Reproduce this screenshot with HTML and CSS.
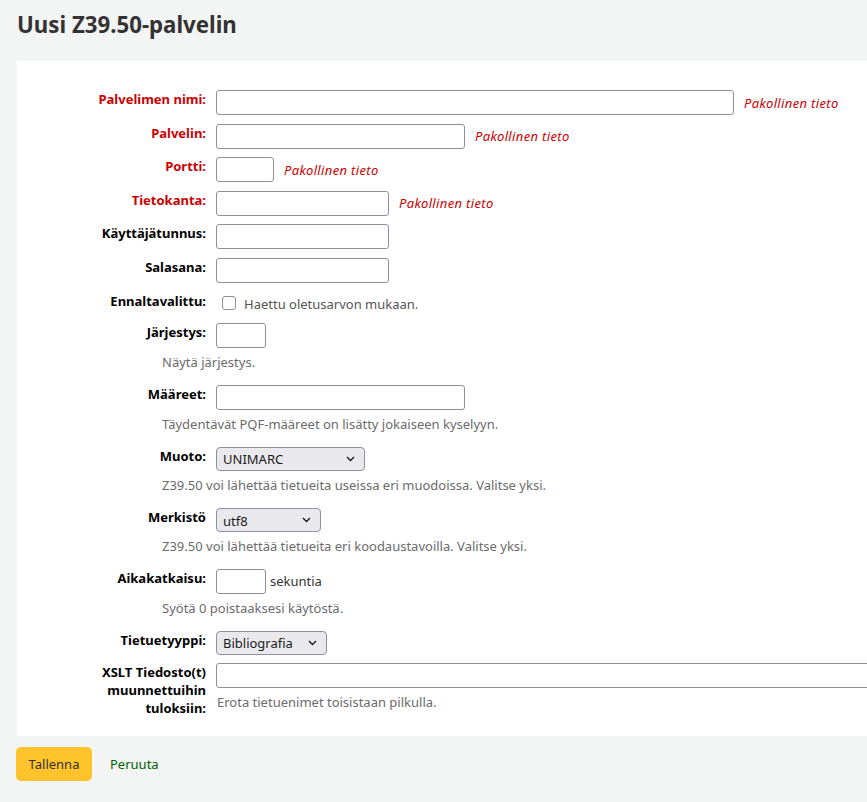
FILE: index.html
```html
<!DOCTYPE html>
<html lang="fi">
<head>
<meta charset="utf-8">
<title>Uusi Z39.50-palvelin</title>
<link rel="stylesheet" href="styles.css">
</head>
<body>
<main class="page">
  <h1 class="title">Uusi Z39.50-palvelin</h1>
  <form class="form">
    <fieldset class="panel">
      <ol class="rows">
        <li class="row">
          <div class="line">
            <label class="lbl req" for="name">Palvelimen nimi:</label>
            <div class="field"><input class="text w-name" id="name" type="text"><span class="required">Pakollinen tieto</span></div>
          </div>
        </li>
        <li class="row">
          <div class="line">
            <label class="lbl req" for="host">Palvelin:</label>
            <div class="field"><input class="text w-wide" id="host" type="text"><span class="required">Pakollinen tieto</span></div>
          </div>
        </li>
        <li class="row">
          <div class="line">
            <label class="lbl req" for="port">Portti:</label>
            <div class="field"><input class="text w-port" id="port" type="text"><span class="required">Pakollinen tieto</span></div>
          </div>
        </li>
        <li class="row">
          <div class="line">
            <label class="lbl req" for="db">Tietokanta:</label>
            <div class="field"><input class="text w-mid" id="db" type="text"><span class="required">Pakollinen tieto</span></div>
          </div>
        </li>
        <li class="row">
          <div class="line">
            <label class="lbl" for="user">Käyttäjätunnus:</label>
            <div class="field"><input class="text w-mid" id="user" type="text"></div>
          </div>
        </li>
        <li class="row">
          <div class="line">
            <label class="lbl" for="pass">Salasana:</label>
            <div class="field"><input class="text w-mid" id="pass" type="text"></div>
          </div>
        </li>
        <li class="row">
          <div class="line">
            <label class="lbl" for="checked">Ennaltavalittu:</label>
            <div class="field"><input class="check" id="checked" type="checkbox"><span class="check-text">Haettu oletusarvon mukaan.</span></div>
          </div>
        </li>
        <li class="row">
          <div class="line">
            <label class="lbl" for="rank">Järjestys:</label>
            <div class="field"><input class="text w-small" id="rank" type="text"></div>
          </div>
          <div class="hint">Näytä järjestys.</div>
        </li>
        <li class="row">
          <div class="line">
            <label class="lbl" for="attr">Määreet:</label>
            <div class="field"><input class="text w-wide" id="attr" type="text"></div>
          </div>
          <div class="hint">Täydentävät PQF-määreet on lisätty jokaiseen kyselyyn.</div>
        </li>
        <li class="row">
          <div class="line">
            <label class="lbl">Muoto:</label>
            <div class="field">
              <div class="select s-format"><span>UNIMARC</span><svg class="chev" width="9" height="6" viewBox="0 0 9 6"><path d="M1 1 L4.5 4.5 L8 1" fill="none" stroke="#1b1b1b" stroke-width="1.4"/></svg></div>
            </div>
          </div>
          <div class="hint">Z39.50 voi lähettää tietueita useissa eri muodoissa. Valitse yksi.</div>
        </li>
        <li class="row">
          <div class="line">
            <label class="lbl">Merkistö</label>
            <div class="field">
              <div class="select s-enc"><span class="low">utf8</span><svg class="chev" width="9" height="6" viewBox="0 0 9 6"><path d="M1 1 L4.5 4.5 L8 1" fill="none" stroke="#1b1b1b" stroke-width="1.4"/></svg></div>
            </div>
          </div>
          <div class="hint">Z39.50 voi lähettää tietueita eri koodaustavoilla. Valitse yksi.</div>
        </li>
        <li class="row">
          <div class="line">
            <label class="lbl" for="timeout">Aikakatkaisu:</label>
            <div class="field"><input class="text w-small" id="timeout" type="text"><span class="unit">sekuntia</span></div>
          </div>
          <div class="hint">Syötä 0 poistaaksesi käytöstä.</div>
        </li>
        <li class="row">
          <div class="line">
            <label class="lbl">Tietuetyyppi:</label>
            <div class="field">
              <div class="select s-type"><span>Bibliografia</span><svg class="chev" width="9" height="6" viewBox="0 0 9 6"><path d="M1 1 L4.5 4.5 L8 1" fill="none" stroke="#1b1b1b" stroke-width="1.4"/></svg></div>
            </div>
          </div>
        </li>
        <li class="row">
          <div class="line">
            <label class="lbl" for="xslt">XSLT Tiedosto(t) muunnettuihin tuloksiin:</label>
            <div class="field field-col">
              <input class="text w-full" id="xslt" type="text">
              <div class="hint-inline">Erota tietuenimet toisistaan pilkulla.</div>
            </div>
          </div>
        </li>
      </ol>
    </fieldset>
    <div class="actions">
      <button class="btn-save" type="button">Tallenna</button>
      <a class="cancel" href="#">Peruuta</a>
    </div>
  </form>
</main>
</body>
</html>
```

FILE: styles.css
```css
html, body {
  margin: 0;
  padding: 0;
}
body {
  background: #f3f4f4;
  font-family: "Noto Sans", "Open Sans", sans-serif;
  font-size: 13px;
  color: #000;
  overflow-x: hidden;
}
.page {
  padding: 10.5px 0 0 0;
}
.title {
  margin: 0 0 22.5px 17px;
  font-size: 22.25px;
  line-height: 28px;
  font-weight: 700;
  color: #333;
}
.form {
  margin: 0;
}
.panel {
  margin: 0 -40px 0 17px;
  padding: 0;
  border: 0;
  background: #fff;
  min-width: 0;
}
.rows {
  list-style: none;
  margin: 0;
  padding: 29px 0 10.7px 0;
}
.row {
  margin: 0 0 8.6px 0;
}
.line {
  display: flex;
  align-items: flex-start;
}
.lbl {
  flex: 0 0 130px;
  margin: 0 10px 0 59px;
  text-align: right;
  font-weight: 700;
  line-height: 18px;
}
.lbl.req {
  color: #cc0000;
}
.field {
  display: flex;
  align-items: center;
  min-height: 18px;
}
.field-col {
  flex-direction: column;
  align-items: flex-start;
}
.text {
  box-sizing: border-box;
  height: 25px;
  margin: 0;
  padding: 2px 6px;
  border: 1px solid #8f8f9d;
  border-radius: 3px;
  background: #fff;
  font: inherit;
}
.w-name { width: 518px; }
.w-wide { width: 249px; }
.w-port { width: 58px; }
.w-mid { width: 173px; }
.w-small { width: 50px; }
.w-full { width: 700px; }
.required {
  margin-left: 10px;
  color: #cc0000;
  font-style: italic;
  letter-spacing: 0.35px;
}
.check {
  appearance: none;
  -webkit-appearance: none;
  box-sizing: border-box;
  width: 14px;
  height: 14px;
  margin: 4.5px 8px 4.5px 6px;
  border: 1px solid #8f8f9d;
  border-radius: 3px;
  background: #fff;
}
.check-text {
  color: #555;
  padding-top: 1px;
}
.unit {
  margin-left: 4px;
  color: #333;
}
.hint {
  padding: 5px 0 5.3px 145px;
  line-height: 18px;
  color: #6b6b6b;
}
.hint-inline {
  padding-top: 5px;
  margin-left: 1px;
  line-height: 18px;
  color: #6b6b6b;
}
.select {
  box-sizing: border-box;
  height: 24px;
  display: flex;
  align-items: center;
  justify-content: space-between;
  padding: 0 9px 0 6px;
  border: 1px solid #8f8f9d;
  border-radius: 4px;
  background: #e9e9ed;
  color: #1b1b1b;
}
.select .low {
  padding-top: 2px;
}
.s-format { width: 149px; }
.s-enc { width: 105px; }
.s-type { width: 111px; }
.actions {
  display: flex;
  align-items: center;
  gap: 18px;
  padding: 11px 0 0 16px;
}
.btn-save {
  box-sizing: border-box;
  width: 76px;
  height: 34px;
  border: 0;
  border-radius: 5px;
  background: #ffc32b;
  color: #333;
  font: inherit;
  padding: 0;
}
.cancel {
  color: #006100;
  text-decoration: none;
}
```
